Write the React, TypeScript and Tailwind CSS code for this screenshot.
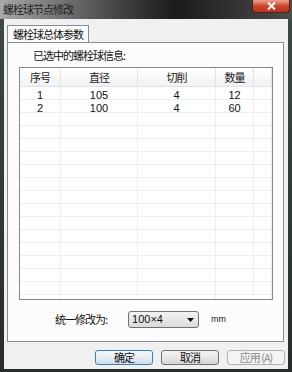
const rows = [
  { no: '1', dia: '105', cut: '4', qty: '12' },
  { no: '2', dia: '100', cut: '4', qty: '60' },
]

const cols = 'grid grid-cols-[41px_77px_78px_38px_1fr]'
const cjk = "font-['Noto_Sans_CJK_SC','Noto_Sans',sans-serif] whitespace-nowrap tracking-[-1px]"
const num = "font-['Liberation_Sans','Noto_Sans_CJK_SC',sans-serif] whitespace-nowrap"

function Cell({ children }: { children?: React.ReactNode }) {
  return (
    <div className={`flex items-center justify-center border-r border-[#efefef] text-[11px] text-[#111] ${num}`}>
      {children}
    </div>
  )
}

function Head({ children }: { children?: React.ReactNode }) {
  return (
    <div className={`flex items-center justify-center border-r border-[#e4e4e4] text-[11px] text-[#222] ${cjk}`}>
      {children}
    </div>
  )
}

function WinButton({ children, primary, disabled }: { children: React.ReactNode; primary?: boolean; disabled?: boolean }) {
  const tone = disabled
    ? 'border-[#adb2b5] bg-[#f4f4f4] text-[#8a8a8a]'
    : primary
      ? 'border-[#3c7fb1] bg-linear-to-b from-[#f4f8fb] via-[#e6eef5] to-[#cfdde9] text-[#111]'
      : 'border-[#707070] bg-linear-to-b from-[#f2f2f2] via-[#e9e9e9] to-[#d3d3d3] text-[#111]'
  return (
    <button
      type="button"
      className={`flex h-[15px] w-[58px] items-center justify-center rounded-[3px] border text-[11px] leading-none ${cjk} ${tone}`}
    >
      {children}
    </button>
  )
}

export default function App() {
  const filler = Array.from({ length: 15 })
  return (
    <div className="flex h-[372px] w-[292px] flex-col bg-linear-to-b from-[#3d4a43] to-[#262c2a]">
      {/* title bar */}
      <div className="flex h-[19px] items-start justify-between bg-linear-to-r from-[#a8a8a8] via-[#1b1b1b] via-60% to-[#4c4c4c]">
        <span className={`pl-[3px] pt-[1px] text-[11px] leading-[16px] text-[#1e1e1e] ${cjk}`}>螺栓球节点修改</span>
        <div className="mr-[2px] flex h-[13px] w-[38px] items-center justify-center rounded-b-[4px] border border-t-0 border-[#5a1d14] bg-linear-to-b from-[#e9a08f] via-[#c9452c] to-[#b8341c]">
          <svg width="9" height="8" viewBox="0 0 9 8">
            <path d="M1 0.5 L8 7.5 M8 0.5 L1 7.5" stroke="#fff" strokeWidth="2" />
          </svg>
        </div>
      </div>

      {/* client */}
      <div className="mb-[3px] ml-[4px] mr-[4px] flex flex-1 flex-col bg-[#f0f0f0] pl-[3px] pr-[1px] pt-[6px]">
        <div className={`flex h-[17px] w-[82px] items-center justify-center border border-b-0 border-[#898c95] bg-[#fcfcfc] text-[11px] text-[#111] ${cjk}`}>
          螺栓球总体参数
        </div>
        <div className="flex h-[300px] w-[277px] flex-col border border-[#898c95] bg-[#fcfcfc]">
          <div className={`pl-[25px] pt-[4px] text-[11px] leading-[16px] text-[#111] ${cjk}`}>已选中的螺栓球信息:</div>

          <div className="ml-[11px] mt-[4px] h-[233px] w-[254px] overflow-hidden border border-[#828790] bg-white">
            <div className={`${cols} h-[19px] border-b border-[#e2e2e2] bg-linear-to-b from-white to-[#f1f2f4]`}>
              <Head>序号</Head>
              <Head>直径</Head>
              <Head>切削</Head>
              <Head>数量</Head>
              <Head />
            </div>
            {rows.map((r) => (
              <div key={r.no} className={`${cols} h-[13px] border-b border-[#efefef]`}>
                <Cell>{r.no}</Cell>
                <Cell>{r.dia}</Cell>
                <Cell>{r.cut}</Cell>
                <Cell>{r.qty}</Cell>
                <Cell />
              </div>
            ))}
            {filler.map((_, i) => (
              <div key={i} className={`${cols} h-[13px] border-b border-[#efefef]`}>
                <Cell />
                <Cell />
                <Cell />
                <Cell />
                <Cell />
              </div>
            ))}
          </div>

          <div className="mt-[11px] flex items-center">
            <span className={`ml-[47px] text-[11px] text-[#111] ${cjk}`}>统一修改为:</span>
            <div className="ml-[21px] flex h-[17px] w-[71px] items-center justify-between rounded-[3px] border border-[#707070] bg-linear-to-b from-[#f2f2f2] to-[#dcdcdc] pl-[3px] pr-[4px]">
              <span className={`text-[11px] text-[#111] ${num}`}>100×4</span>
              <svg width="7" height="4" viewBox="0 0 7 4">
                <path d="M0 0 H7 L3.5 4 Z" fill="#111" />
              </svg>
            </div>
            <span className={`ml-[12px] text-[9px] text-[#222] ${num}`}>mm</span>
          </div>
        </div>

        <div className="mt-[8px] flex gap-[8px] pl-[88px]">
          <WinButton primary>确定</WinButton>
          <WinButton>取消</WinButton>
          <WinButton disabled>应用 (A)</WinButton>
        </div>
      </div>
    </div>
  )
}
